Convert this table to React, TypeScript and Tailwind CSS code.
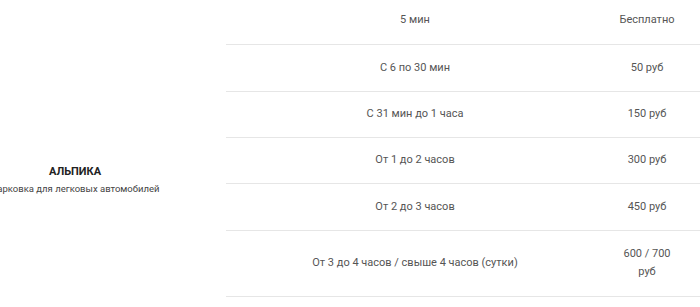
const rows = [
  { time: '5 мин', price: 'Бесплатно', h: 'h-[47px]' },
  { time: 'С 6 по 30 мин', price: '50 руб', h: 'h-[47px]' },
  { time: 'С 31 мин до 1 часа', price: '150 руб', h: 'h-[46px]' },
  { time: 'От 1 до 2 часов', price: '300 руб', h: 'h-[46px]' },
  { time: 'От 2 до 3 часов', price: '450 руб', h: 'h-[47px]' },
  { time: 'От 3 до 4 часов / свыше 4 часов (сутки)', price: '600 / 700 руб', h: 'h-[66px]' },
];

export default function App() {
  return (
    <div className="w-[700px] h-[307px] overflow-hidden bg-white font-['Roboto',sans-serif] text-[#555]">
      <table className="ml-[-76px] mt-[-3px] w-[776px] border-collapse table-fixed text-[11px] leading-[18px]">
        <colgroup>
          <col className="w-[302px]" />
          <col className="w-[378px]" />
          <col className="w-[96px]" />
        </colgroup>
        <tbody>
          {rows.map((r, i) => (
            <tr key={i} className={r.h}>
              {i === 0 && (
                <td rowSpan={rows.length} className="align-top text-center pt-[166px]">
                  <div className="font-bold text-[#222] text-[11px] leading-[18px]">АЛЬПИКА</div>
                  <div className="text-[9.5px] leading-[16px] text-[#444]">Парковка для легковых автомобилей</div>
                </td>
              )}
              <td className="text-center align-middle border-b border-[#e6e6e6] px-3">{r.time}</td>
              <td className="text-center align-middle border-b border-[#e6e6e6] pl-[13px] pr-[23px]">{r.price}</td>
            </tr>
          ))}
        </tbody>
      </table>
    </div>
  );
}
